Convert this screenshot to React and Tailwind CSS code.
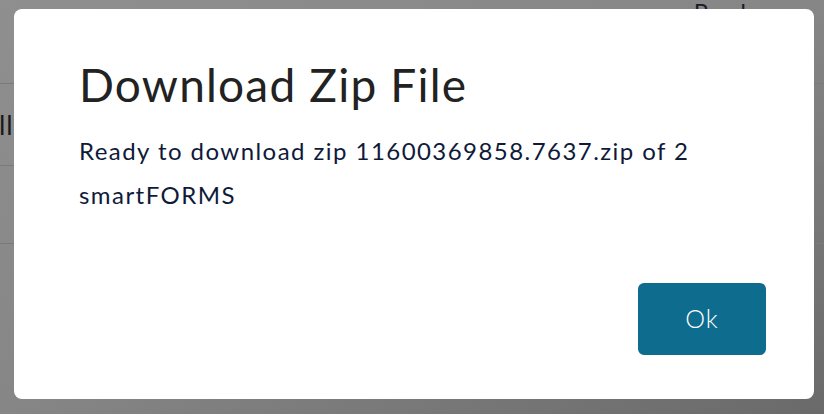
import React from 'react';

/**
 * Modal shown once the zip archive is ready to download.
 *
 * @return {*} The component.
 */
export default function App() {
  return (
    <div className="relative w-[824px] h-[414px] overflow-hidden bg-gradient-to-br from-[#8f8f8f] via-[#868686] to-[#6a6a6a] font-['Lato',sans-serif]">
      {/* page behind the overlay */}
      <div className="flex flex-col w-full">
        <div className="h-[84px] border-b border-[#7a7a7a] flex justify-end pr-[78px]">
          <span className="text-[24px] leading-[24px] text-[#1b1b2a]">Read</span>
        </div>
        <div className="h-[82px] border-b border-[#7a7a7a] flex items-center">
          <span className="text-[27px] leading-[28px] text-[#1b1b1b] -ml-[1px] tracking-[1px]">lled</span>
        </div>
        <div className="h-[78px] border-b border-[#7a7a7a]" />
      </div>

      <div className="absolute left-[14px] top-[9px] w-[800px] h-[390px] bg-white rounded-lg flex flex-col pl-[65px] pr-[48px] pt-[44px] pb-[44px]">
        <h1 className="text-[46px] leading-[64px] text-[#222222] font-normal tracking-[1.2px]">Download Zip File</h1>
        <p className="mt-[12px] text-[24px] leading-[44px] text-[#0f1a3a] tracking-[1.45px] max-w-[680px]">
          Ready to download zip 11600369858.7637.zip of 2 smartFORMS
        </p>
        <button className="mt-auto self-end w-[128px] h-[72px] rounded-md bg-[#0e6d8e] text-white text-[25px] font-light tracking-[1px]">
          Ok
        </button>
      </div>
    </div>
  );
}
